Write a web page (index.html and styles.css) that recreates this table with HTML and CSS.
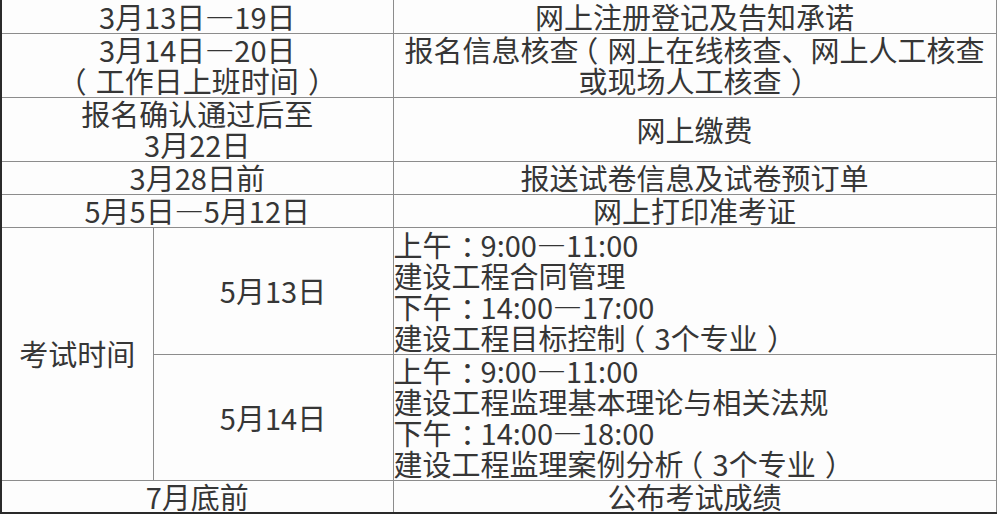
FILE: index.html
```html
<!DOCTYPE html>
<html lang="zh-CN">
<head>
<meta charset="utf-8">
<title>考试安排</title>
<link rel="stylesheet" href="styles.css">
</head>
<body>
<table class="schedule">
  <colgroup>
    <col class="c-a">
    <col class="c-b">
    <col class="c-c">
  </colgroup>
  <tr class="r-1">
    <td colspan="2">3月13日—19日</td>
    <td>网上注册登记及告知承诺</td>
  </tr>
  <tr class="r-2">
    <td colspan="2">3月14日—20日<br><span class="po">（</span>工作日上班时间<span class="pc">）</span></td>
    <td>报名信息核查<span class="po">（</span>网上在线核查、网上人工核查<br>或现场人工核查<span class="pc">）</span></td>
  </tr>
  <tr class="r-2">
    <td colspan="2">报名确认通过后至<br>3月22日</td>
    <td>网上缴费</td>
  </tr>
  <tr class="r-1">
    <td colspan="2">3月28日前</td>
    <td>报送试卷信息及试卷预订单</td>
  </tr>
  <tr class="r-1">
    <td colspan="2">5月5日—5月12日</td>
    <td>网上打印准考证</td>
  </tr>
  <tr class="r-4">
    <td rowspan="2">考试时间</td>
    <td>5月13日</td>
    <td class="left">上午<span class="co">：</span>9:00—11:00<br>建设工程合同管理<br>下午<span class="co">：</span>14:00—17:00<br>建设工程目标控制<span class="po">（</span>3个专业<span class="pc">）</span></td>
  </tr>
  <tr class="r-4b">
    <td>5月14日</td>
    <td class="left">上午<span class="co">：</span>9:00—11:00<br>建设工程监理基本理论与相关法规<br>下午<span class="co">：</span>14:00—18:00<br>建设工程监理案例分析<span class="po">（</span>3个专业<span class="pc">）</span></td>
  </tr>
  <tr class="r-1 last">
    <td colspan="2">7月底前</td>
    <td>公布考试成绩</td>
  </tr>
</table>
</body>
</html>
```

FILE: styles.css
```css
html, body {
  margin: 0;
  padding: 0;
  background: #fdfdfd;
}

body {
  width: 1000px;
  height: 514px;
  overflow: hidden;
  background: #fdfdfd;
}

.schedule {
  border-collapse: collapse;
  table-layout: fixed;
  width: 995px;
  font-family: "Noto Sans CJK SC", "Noto Sans", sans-serif;
  font-size: 29px;
  font-weight: 400;
  line-height: 31px;
  color: #363636;
  border-left: 2px solid #2a2a2a;
  border-bottom: 3px solid #2a2a2a;
}

.c-a { width: 152px; }
.c-b { width: 240px; }
.c-c { width: 603px; }

.schedule td {
  border: 1px solid #8c8c8c;
  padding: 0;
  text-align: center;
  vertical-align: middle;
  white-space: nowrap;
  overflow: hidden;
}

.schedule tr:first-child td {
  border-top: none;
}

.schedule td.left {
  text-align: left;
  padding-left: 0;
}

/* centre full-width punctuation in its em box, as the reference font does */
.po {
  margin-left: -0.32em;
  margin-right: 0.32em;
}

.pc {
  margin-left: 0.32em;
  margin-right: -0.32em;
}

.co {
  margin-left: 0.3em;
  margin-right: -0.3em;
}

.r-1 { height: 33px; }
.r-2 { height: 64px; }
.r-4 { height: 127px; }
.r-4b { height: 126px; }
.last { height: 32px; }
```
